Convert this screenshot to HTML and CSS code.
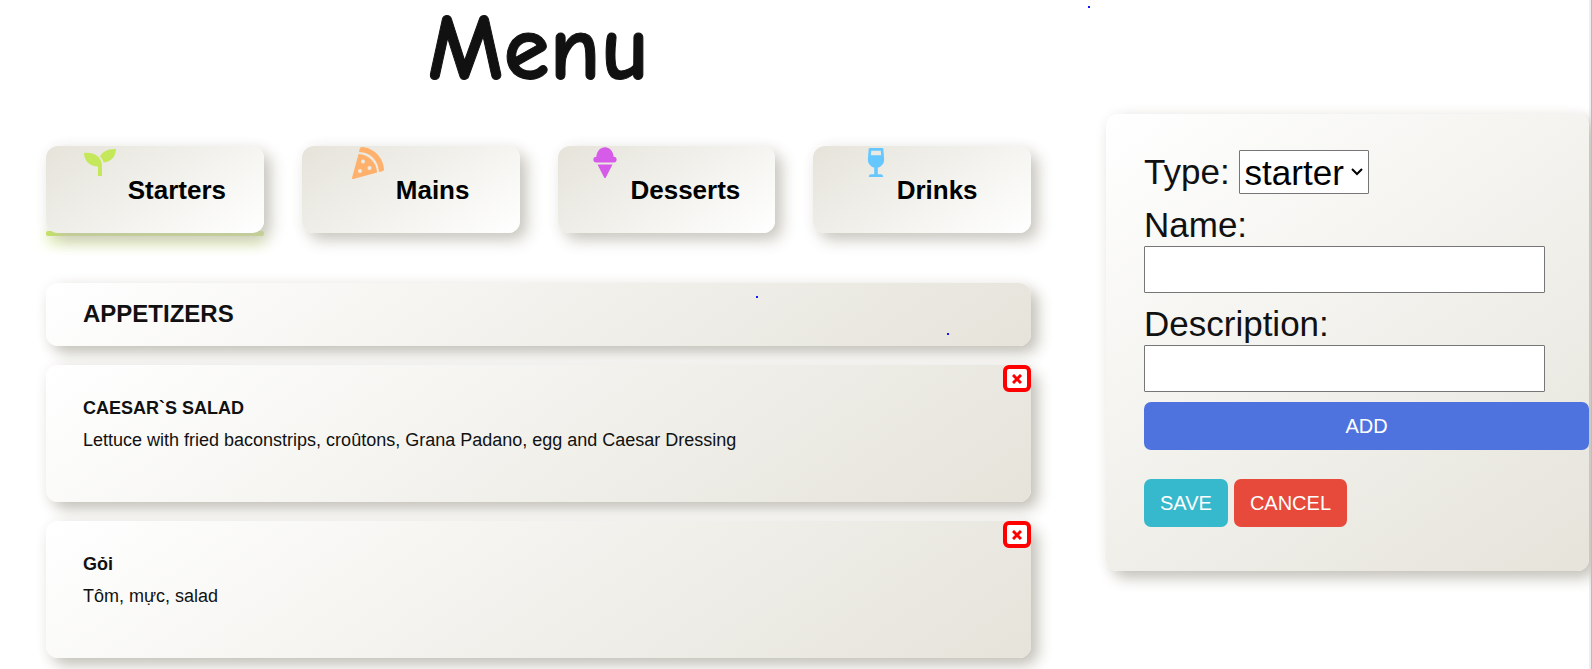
FILE: index.html
```html
<!DOCTYPE html>
<html lang="en">
<head>
<meta charset="utf-8">
<meta name="viewport" content="width=device-width, initial-scale=1">
<title>Menu</title>
<link rel="stylesheet" href="styles.css">
</head>
<body>
<div class="page">
  <main class="menu">
    <h1 class="title">Menu</h1>
    <nav class="tabs" aria-label="Courses">
      <div class="tab-slot active">
        <button class="tab" type="button">
          <svg class="icon seedling" width="32" height="32" viewBox="0 0 32 32" aria-hidden="true"><path d="M0 6C9 5 18 9 18 19V28.500a.500.500 0 0 1-.500.500H14V19.500C6 19.500 0 14 0 6z"/><path d="M32 2C24 1.500 18 5 16 9.500 18 11.500 19 13.500 19.500 15.500 27 15 31.500 10 32 2z"/></svg>
          <span>Starters</span>
        </button>
      </div>
      <div class="tab-slot">
        <button class="tab" type="button">
          <svg class="icon pizza" width="32" height="32" viewBox="0 0 512 512" aria-hidden="true"><path d="M158.900.100c-16.200-1.300-31.100 10-34.700 25.800l-12.600 55.700c205.900 4.600 312.500 153.500 318.700 318.700l55.200-12.100c16.200-3.600 27.600-18.900 26.300-35.500C497.800 165.300 346.900 14.300 158.900.100z"/><path fill-rule="evenodd" d="M105.100 110.500.600 491.300c-3.300 12.200 7.800 23.500 20.100 20.100l381-105.200C394 248.700 271.500 115.900 105.100 110.500zM128 416a32 32 0 1 1 0-64 32 32 0 0 1 0 64zm48-152a32 32 0 1 1 0-64 32 32 0 0 1 0 64zm104 104a32 32 0 1 1 0-64 32 32 0 0 1 0 64z"/></svg>
          <span>Mains</span>
        </button>
      </div>
      <div class="tab-slot">
        <button class="tab" type="button">
          <svg class="icon dessert" width="26" height="31" viewBox="0 0 416 512" aria-hidden="true"><path d="M352 160h-1C342 70 284 6 208 6S74 70 65 160h-1a48 48 0 0 0 0 96h288a48 48 0 0 0 0-96zM84 288l110 215c6 12 22 12 28 0l110-215z"/></svg>
          <span>Desserts</span>
        </button>
      </div>
      <div class="tab-slot">
        <button class="tab" type="button">
          <svg class="icon drink" width="18" height="31" viewBox="0 0 320 512" aria-hidden="true"><path fill-rule="evenodd" d="M248 464h-56V346c68-16 118-80 112-153L290 15C289 6 282 0 274 0H46c-8 0-15 6-16 15L16 193c-6 73 44 137 112 153v118H72c-22 0-40 18-40 40 0 4 4 8 8 8h240c4 0 8-4 8-8 0-22-18-40-40-40zM75 48h170l6 80H69z"/></svg>
          <span>Drinks</span>
        </button>
      </div>
    </nav>
    <section class="list">
      <h2 class="panel section-title">APPETIZERS</h2>
      <article class="panel dish">
        <h3>CAESAR`S SALAD</h3>
        <p>Lettuce with fried baconstrips, croûtons, Grana Padano, egg and Caesar Dressing</p>
        <button class="remove" type="button" aria-label="Remove Caesar`s salad"><svg width="10" height="10" viewBox="0 0 10 10" aria-hidden="true"><path d="M1 1l8 8M9 1L1 9"/></svg></button>
      </article>
      <article class="panel dish">
        <h3>Gỏi</h3>
        <p>Tôm, mực, salad</p>
        <button class="remove" type="button" aria-label="Remove Gỏi"><svg width="10" height="10" viewBox="0 0 10 10" aria-hidden="true"><path d="M1 1l8 8M9 1L1 9"/></svg></button>
      </article>
    </section>
  </main>
  <aside class="side">
    <form class="panel editor">
      <div class="type-row">
        <label for="type">Type:</label>
        <div class="select-wrap">
          <select id="type"><option>starter</option><option>main</option><option>dessert</option><option>drink</option></select>
          <svg class="chevron" width="12" height="8" viewBox="0 0 12 8" aria-hidden="true"><path d="M1 1l5 5 5-5"/></svg>
        </div>
      </div>
      <div class="field"><label for="name">Name:</label><input id="name" type="text"></div>
      <div class="field"><label for="description">Description:</label><input id="description" type="text"></div>
      <button class="btn add" type="button">ADD</button>
      <div class="actions">
        <button class="btn save" type="button">SAVE</button>
        <button class="btn cancel" type="button">CANCEL</button>
      </div>
    </form>
  </aside>
  <i class="dot dot-a"></i>
  <i class="dot dot-b"></i>
  <i class="dot dot-c"></i>
</div>
</body>
</html>
```
FILE: styles.css
```css
* { box-sizing: border-box; }
html, body { height: 100%; }
body {
  margin: 0;
  overflow: hidden;
  background: #fff;
  color: #111;
  font-family: Arial, "Liberation Sans", sans-serif;
}
h1, h2, h3, p { margin: 0; }
button, input, select { font-family: inherit; }

.page {
  position: relative;
  display: grid;
  grid-template-columns: 985fr 485fr;
  column-gap: 75px;
  min-height: 100%;
  padding-left: 46px;
  border-right: 1px solid #bbbbbf;
  box-shadow: inset -2px 0 #eeeef0;
}
.title {
  height: 146px;
  text-align: center;
  font-family: "Comic Sans MS", "Comic Neue", Lato, sans-serif;
  font-size: 94px;
  line-height: 98px;
  font-weight: 700;
  -webkit-text-stroke: 1px #111;
}

.tabs { display: grid; grid-template-columns: repeat(4, 1fr); gap: 38px; }
.tab-slot { position: relative; z-index: 0; }
.active::before {
  content: "";
  position: absolute;
  z-index: -1;
  left: 0;
  right: 0;
  bottom: -3px;
  height: 5px;
  border-radius: 2px;
  background: #c5e85a;
  box-shadow: 0 5px 14px #c5e85a;
}
.tab {
  display: flex;
  align-items: center;
  justify-content: center;
  gap: 12px;
  width: 100%;
  height: 87px;
  padding: 1px;
  border: 0;
  border-radius: 12px;
  background: linear-gradient(145deg, #e6e3da, #ebeae3 25%, #fff);
  box-shadow: 0 0 16px rgba(90, 85, 65, .04), 7px 7px 15px rgba(197, 195, 186, .9);
  color: #000;
  font-size: 26px;
  line-height: 30px;
  font-weight: 700;
}
.icon { align-self: flex-start; fill: currentColor; }
.seedling { color: #c5e85a; }
.pizza { color: #ffb06b; }
.dessert { color: #d65be8; }
.drink { color: #66c7ff; }

.list { display: flex; flex-direction: column; gap: 19px; padding-top: 50px; }
.panel {
  position: relative;
  border-radius: 12px;
  background: linear-gradient(145deg, #fff, #ebeae3 75%, #e6e3da);
  box-shadow: 0 0 16px rgba(90, 85, 65, .04), 7px 7px 15px #c5c3ba;
}
.section-title { padding: 15px 37px 17px; font-size: 24px; line-height: 31px; }
.dish { padding: 27px 37px 46px; font-size: 18px; line-height: 32px; }
.dish h3 { font-size: 18px; }
.remove {
  position: absolute;
  top: 0;
  right: 0;
  display: grid;
  place-items: center;
  width: 28px;
  height: 27px;
  padding: 0;
  border: 4px solid #f00;
  border-radius: 6px;
  background: #fff;
}
.remove svg { fill: none; stroke: #f00; stroke-width: 3; }

.side { padding-top: 114px; padding-right: 2px; }
.editor { padding: 36px 0 44px 38px; font-size: 35px; line-height: 38px; }
.type-row { display: flex; align-items: center; gap: 9px; }
.select-wrap { position: relative; }
.select-wrap select {
  display: block;
  width: 130px;
  height: 44px;
  padding: 0 5px;
  appearance: none;
  border: 1px solid #767676;
  border-radius: 1px;
  background: #fff;
  color: #000;
  font-size: 35px;
}
.chevron {
  position: absolute;
  right: 6px;
  top: 18px;
  fill: none;
  stroke: #000;
  stroke-width: 2;
  pointer-events: none;
}
.field { padding-top: 12px; }
.field label { display: block; padding-bottom: 2px; }
.field input {
  display: block;
  width: 90%;
  height: 47px;
  padding: 2px;
  border: 1px solid #767676;
  border-radius: 1px;
  background: #fff;
  font-size: 35px;
}
.btn {
  height: 48px;
  padding: 0 16px;
  border: 0;
  border-radius: 7px;
  color: #fff;
  font-size: 20px;
}
.add { display: block; width: 100%; margin-top: 10px; background: #4e73df; }
.actions { display: flex; gap: 6px; padding-top: 29px; }
.save { background: #36b9cc; }
.cancel { background: #e74a3b; }

.dot {
  position: absolute;
  width: 2px;
  height: 2px;
  background: #1414ff;
}
.dot-a { left: 1088px; top: 6px; }
.dot-b { left: 756px; top: 296px; }
.dot-c { left: 947px; top: 333px; }
```
